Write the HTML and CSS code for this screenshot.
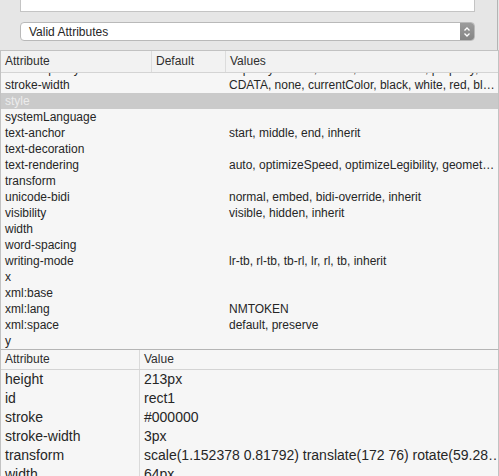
FILE: index.html
```html
<!DOCTYPE html>
<html lang="en">
<head>
    <meta charset="UTF-8">
    <title>Attributes</title>
    <link rel="stylesheet" href="styles.css">
</head>
<body>
    <div class="panel-top">
        <div class="text-field"></div>
        <div class="select">
            <span class="select-label">Valid Attributes</span>
            <span class="stepper">
                <svg width="8" height="12" viewBox="0 0 8 12">
                    <path d="M1.5 4.5 L4 2 L6.5 4.5 M1.5 7.5 L4 10 L6.5 7.5" fill="none" stroke="#fff" stroke-width="1.3"/>
                </svg>
            </span>
        </div>
    </div>

    <!-- Valid attributes list -->
    <div class="valid-table">
        <div class="row head">
            <div class="cell">Attribute</div>
            <div class="cell">Default</div>
            <div class="cell">Values</div>
        </div>
        <div class="body">
            <div class="list">
                <div class="row"><div class="cell">stroke-opacity</div><div class="cell"></div><div class="cell">&lt;opacity-value&gt;, inherit, currentColor, property, ...</div></div>
                <div class="row"><div class="cell">stroke-width</div><div class="cell"></div><div class="cell">CDATA, none, currentColor, black, white, red, bl…</div></div>
                <div class="row selected"><div class="cell">style</div><div class="cell"></div><div class="cell"></div></div>
                <div class="row"><div class="cell">systemLanguage</div><div class="cell"></div><div class="cell"></div></div>
                <div class="row"><div class="cell">text-anchor</div><div class="cell"></div><div class="cell">start, middle, end, inherit</div></div>
                <div class="row"><div class="cell">text-decoration</div><div class="cell"></div><div class="cell"></div></div>
                <div class="row"><div class="cell">text-rendering</div><div class="cell"></div><div class="cell">auto, optimizeSpeed, optimizeLegibility, geomet…</div></div>
                <div class="row"><div class="cell">transform</div><div class="cell"></div><div class="cell"></div></div>
                <div class="row"><div class="cell">unicode-bidi</div><div class="cell"></div><div class="cell">normal, embed, bidi-override, inherit</div></div>
                <div class="row"><div class="cell">visibility</div><div class="cell"></div><div class="cell">visible, hidden, inherit</div></div>
                <div class="row"><div class="cell">width</div><div class="cell"></div><div class="cell"></div></div>
                <div class="row"><div class="cell">word-spacing</div><div class="cell"></div><div class="cell"></div></div>
                <div class="row"><div class="cell">writing-mode</div><div class="cell"></div><div class="cell">lr-tb, rl-tb, tb-rl, lr, rl, tb, inherit</div></div>
                <div class="row"><div class="cell">x</div><div class="cell"></div><div class="cell"></div></div>
                <div class="row"><div class="cell">xml:base</div><div class="cell"></div><div class="cell"></div></div>
                <div class="row"><div class="cell">xml:lang</div><div class="cell"></div><div class="cell">NMTOKEN</div></div>
                <div class="row"><div class="cell">xml:space</div><div class="cell"></div><div class="cell">default, preserve</div></div>
                <div class="row"><div class="cell">y</div><div class="cell"></div><div class="cell"></div></div>
            </div>
        </div>
    </div>

    <!-- Current element attributes -->
    <div class="attr-table">
        <div class="row head">
            <div class="cell">Attribute</div>
            <div class="cell">Value</div>
        </div>
        <div class="row"><div class="cell">height</div><div class="cell">213px</div></div>
        <div class="row"><div class="cell">id</div><div class="cell">rect1</div></div>
        <div class="row"><div class="cell">stroke</div><div class="cell">#000000</div></div>
        <div class="row"><div class="cell">stroke-width</div><div class="cell">3px</div></div>
        <div class="row"><div class="cell">transform</div><div class="cell">scale(1.152378 0.81792) translate(172 76) rotate(59.28…</div></div>
        <div class="row"><div class="cell">width</div><div class="cell">64px</div></div>
    </div>
</body>
</html>
```

FILE: styles.css
```css
body {
    margin: 0;
    width: 499px;
    height: 476px;
    overflow: hidden;
    background-color: #e6e6e6;
    font-family: "Liberation Sans", Arial, sans-serif;
    color: #262626;
}

.panel-top {
    height: 50px;
    padding: 0 22px 0 20px;
    border-right: 1px solid #b4b4b4;
    margin-right: 1px;
}

.text-field {
    height: 11px;
    background-color: #fff;
    border: 1px solid #c4c4c4;
    border-top: none;
}

.select {
    display: flex;
    align-items: center;
    margin-top: 10px;
    height: 17px;
    background-color: #fff;
    border: 1px solid #b9b9b9;
    border-radius: 4px;
    overflow: hidden;
    font-size: 12px;
}

.select-label {
    flex: 1;
    padding-left: 8px;
}

.stepper {
    width: 14px;
    height: 17px;
    display: flex;
    align-items: center;
    justify-content: center;
    background: linear-gradient(#9c9c9c, #858585);
}

.row {
    display: grid;
    white-space: nowrap;
}

.cell {
    overflow: hidden;
    padding-left: 4px;
}

/* Table du haut */
.valid-table {
    width: 497px;
    border: 1px solid #c2c2c2;
    border-bottom-color: #b5b5b5;
    background-color: #f6f6f6;
    font-size: 12px;
}

.valid-table .row {
    grid-template-columns: 150px 74px 1fr;
    height: 16px;
    line-height: 16px;
}

.valid-table .head {
    height: 21px;
    line-height: 21px;
    background-color: #f2f2f2;
    border-bottom: 1px solid #d4d4d4;
    color: #2e2e2e;
}

.valid-table .head .cell + .cell {
    border-left: 1px solid #dcdcdc;
}

.valid-table .body {
    height: 276px;
    overflow: hidden;
}

.valid-table .list {
    margin-top: -12px;
}

.valid-table .selected {
    background-color: #cacaca;
    color: #ececec;
}

/* Table du bas */
.attr-table {
    width: 497px;
    border-left: 1px solid #c2c2c2;
    border-right: 1px solid #c2c2c2;
    background-color: #f6f6f6;
    font-size: 14px;
}

.attr-table .row {
    grid-template-columns: 138px 1fr;
    height: 19px;
    line-height: 19px;
}

.attr-table .row .cell + .cell {
    border-left: 1px solid #dadada;
    padding-left: 4px;
}

.attr-table .head {
    height: 19px;
    line-height: 19px;
    font-size: 12px;
    border-bottom: 1px solid #d4d4d4;
    color: #2e2e2e;
}
```
